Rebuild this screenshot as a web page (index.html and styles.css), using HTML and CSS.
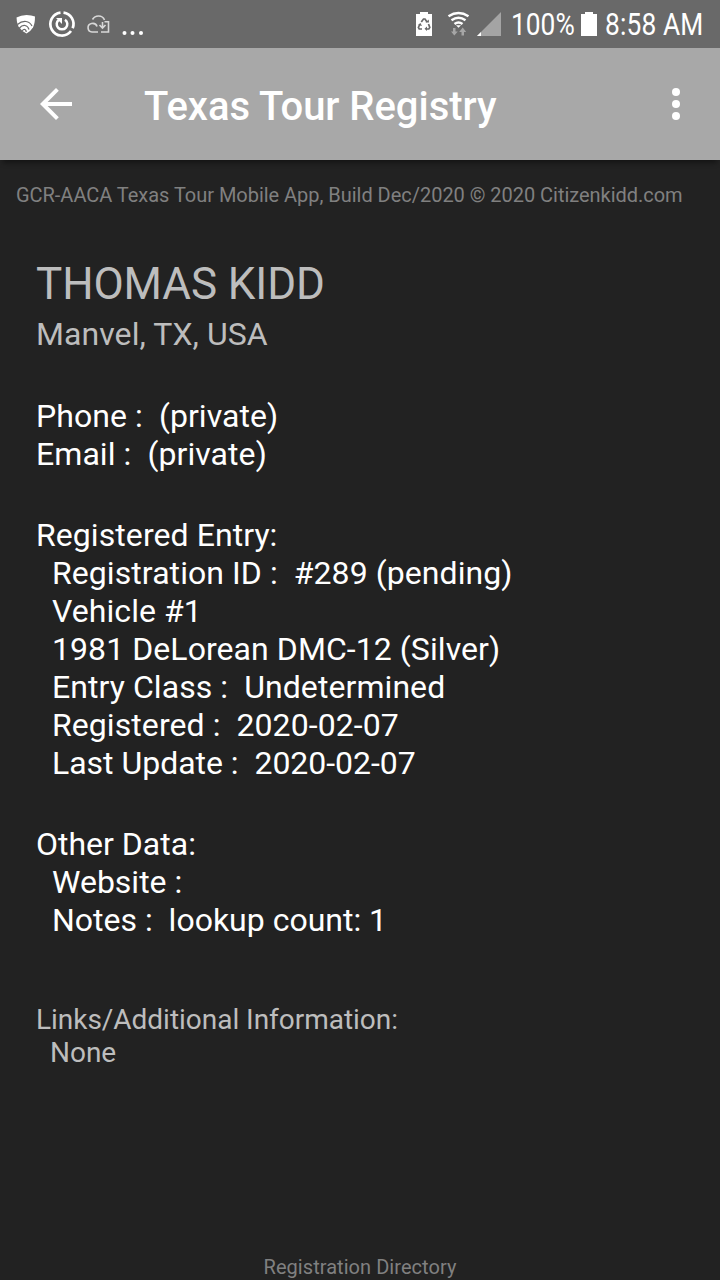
FILE: index.html
```html
<!DOCTYPE html>
<html lang="en">
<head>
    <meta charset="UTF-8">
    <meta name="viewport" content="width=device-width, initial-scale=1.0">
    <title>Texas Tour Registry</title>
    <link rel="stylesheet" href="styles.css">
</head>
<body>
    <div class="status-bar">
        <svg class="status-icons" width="150" height="48" viewBox="0 0 150 48">
            <path d="M16.500 17.500Q21 15 26.500 15q5 0 8.500 1.500 0 7-2 11-2.500 4-6.500 6-5-2.500-8-7-2-4-2-9" fill="#fff"/>
            <path d="M17.500 24.500q4-3.500 8.500-3 4 .5 6 4.500M19.500 28q2.500-3 5.500-2.500 3 .5 4 4M22 31q1.500-2 3-1.500 1.200.5 1.200 2.500" fill="none" stroke="#696969" stroke-width="1.200"/>
            <g fill="none" stroke="#fff">
                <path d="M63.500 12.600a11.500 11.500 0 0 1 9.200 15.600M71 31a11.500 11.500 0 1 1-10.500-18.400" stroke-width="2.700"/>
                <path d="M65 19.700a5.300 5.300 0 1 1-6 0" stroke-width="2.500"/>
            </g>
            <path d="M56 18h6v6z" fill="#fff"/>
            <path d="M98 32h-6a4.300 4.300 0 0 1-.5-8.500q4.500-.8 5.500 3M92.500 19.500q2-3.500 6-3.500 4.500 0 6 4M104.500 21.700h4V32H101M102.500 22v6m-3-3 3 3 3-3" fill="none" stroke="#d8d8d8" stroke-width="1.600"/>
            <g fill="#fff"><circle cx="124.500" cy="33" r="2"/><circle cx="132.500" cy="33" r="2"/><circle cx="141" cy="33" r="2"/></g>
        </svg>
        <div class="status-right">
            <svg class="system-icons" width="90" height="48" viewBox="0 0 90 48">
                <path d="M4 14h4v-2h8v2h4v22H4z" fill="#fff"/>
                <path d="m9.300 22 2.200-3h1.500l2 3m1.500 2 1.300 3.500-1 1.500H14m-4 0H7.200l-.8-1.500L8 24" fill="none" stroke="#696969" stroke-width="1.700"/>
                <path d="m13.500 22.500 3.500 0-.3-3zM15 26.500v4.500l-2.500-2.200zM6 25l2.500-2 1.500 3z" fill="#696969"/>
                <g fill="none" stroke="#fff" stroke-width="2.500">
                    <path d="M36.500 16.300q10-6.500 20 0M39.500 20.300q7-5 14 0M42.500 24q4-3 8 0"/>
                </g>
                <path d="M44 25.200h5l-2.500 2.500z" fill="#fff"/>
                <path d="M41 28h2.500v3.500h2.300L42.300 35.500 39 31.500h2zM49.500 35.500V32h-2.300l3.500-4.500 3.500 4.500h-2.200v3.500z" fill="#a6a6a6"/>
                <path d="M65 36 89 12v24z" fill="#a4a4a4"/>
                <path d="m65 36 4-4v4z" fill="#fff"/>
            </svg>
            <span class="battery-level">100%</span>
            <svg class="battery" width="16" height="24" viewBox="0 0 16 24"><path d="M0 2h4V0h8v2h4v22H0z" fill="#fff"/></svg>
            <span class="time">8:58 AM</span>
        </div>
    </div>
    <header class="app-bar">
        <svg class="back" width="32" height="32" viewBox="0 0 32 32"><path d="M32 14H7.600L18.800 2.800 16 0 0 16l16 16 2.800-2.800L7.600 18H32z" fill="#fff"/></svg>
        <h1>Texas Tour Registry</h1>
        <svg class="more" width="8" height="32" viewBox="0 0 8 32" fill="#fff"><circle cx="4" cy="4" r="4"/><circle cx="4" cy="16" r="4"/><circle cx="4" cy="28" r="4"/></svg>
    </header>
    <main class="content">
        <p class="build">GCR-AACA Texas Tour Mobile App, Build Dec/2020 © 2020 Citizenkidd.com</p>
        <h2 class="name">THOMAS KIDD</h2>
        <p class="city">Manvel, TX, USA</p>
        <div class="details contact">
            <p>Phone :&nbsp; (private)</p>
            <p>Email :&nbsp; (private)</p>
        </div>
        <div class="details entry">
            <p>Registered Entry:</p>
            <div class="indent">
                <p>Registration ID :&nbsp; #289 (pending)</p>
                <p>Vehicle #1</p>
                <p>1981 DeLorean DMC-12 (Silver)</p>
                <p>Entry Class :&nbsp; Undetermined</p>
                <p>Registered :&nbsp; 2020-02-07</p>
                <p class="updated">Last Update :&nbsp; 2020-02-07</p>
            </div>
        </div>
        <div class="details other">
            <p>Other Data:</p>
            <div class="indent">
                <p>Website :</p>
                <p>Notes :&nbsp; lookup count: 1</p>
            </div>
        </div>
        <div class="links">
            <p>Links/Additional Information:</p>
            <p class="none">None</p>
        </div>
        <footer class="directory">Registration Directory</footer>
    </main>
</body>
</html>
```
FILE: styles.css
```css
* {
    margin: 0;
    padding: 0;
    box-sizing: border-box;
}

body {
    width: 720px;
    height: 1280px;
    overflow: hidden;
    font-family: Roboto, sans-serif;
    background-color: #222;
    color: #fff;
    display: flex;
    flex-direction: column;
}

.status-bar {
    height: 48px;
    flex-shrink: 0;
    background-color: #696969;
    display: flex;
    justify-content: space-between;
}

.status-right {
    width: 308px;
    display: flex;
    align-items: center;
    font-size: 31px;
    line-height: 48px;
    white-space: nowrap;
}

.system-icons,
.battery {
    flex-shrink: 0;
}

/* narrow the digits like the system clock font */
.battery-level,
.time {
    transform: scaleX(0.85);
    transform-origin: left center;
    padding-top: 2px;
}

.battery-level {
    width: 70px;
    margin-left: 9px;
}

.time {
    width: 100px;
    margin-left: 8px;
    letter-spacing: 0.15px;
}

.app-bar {
    height: 112px;
    flex-shrink: 0;
    background-color: #a8a8a8;
    box-shadow: 0 6px 5px -3px rgba(0, 0, 0, 0.4);
    display: flex;
    align-items: center;
    padding: 0 40px;
}

.app-bar h1 {
    flex: 1;
    margin-left: 72px;
    padding-top: 4px;
    font-size: 40px;
    font-weight: 500;
    letter-spacing: -0.05px;
}

.content {
    flex: 1;
    display: flex;
    flex-direction: column;
    padding: 21px 16px 0;
}

.build {
    font-size: 20px;
    line-height: 28px;
    letter-spacing: -0.03px;
    color: #808080;
}

.name {
    margin: 48px 20px 0;
    font-size: 44px;
    font-weight: 400;
    line-height: 54px;
    letter-spacing: -0.1px;
    color: #bdbdbd;
}

.city {
    margin-left: 20px;
    font-size: 32px;
    line-height: 46px;
    letter-spacing: 0.07px;
    color: #bdbdbd;
}

.details {
    margin-left: 20px;
    font-size: 32px;
    line-height: 38px;
    letter-spacing: 0.07px;
}

.updated {
    letter-spacing: -0.02px;
}

.contact {
    margin-top: 40px;
}

.entry,
.other {
    margin-top: 43px;
}

.other {
    letter-spacing: 0;
}

.indent {
    padding-left: 16px;
}

.links {
    margin: 64px 0 0 20px;
    font-size: 28px;
    line-height: 33px;
    letter-spacing: -0.03px;
    color: #bdbdbd;
}

.none {
    padding-left: 14px;
}

.directory {
    margin-top: auto;
    text-align: center;
    font-size: 20px;
    line-height: 26px;
    letter-spacing: 0.05px;
    color: #808080;
}
```
